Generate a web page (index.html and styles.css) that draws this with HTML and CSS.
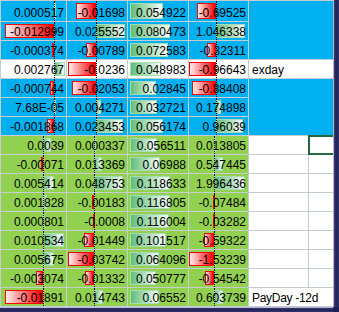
FILE: index.html
```html
<!DOCTYPE html>
<html>
<head>
<meta charset="utf-8">
<link rel="stylesheet" href="styles.css">
</head>
<body>
<div class="frame">
  <div class="sheet">
    <div class="eblk eb1"></div>
    <div class="eblk eb2"></div>

    <div class="row blue">
      <div class="c a"><i class="bar pos" style="margin-left:53px;width:2px"></i><span class="v">0.000517</span><i class="ax"></i></div>
      <div class="c b"><i class="bar neg" style="margin-left:9px;width:20px"></i><span class="v">-0.01698</span><i class="ax"></i></div>
      <div class="c cc"><i class="bar pos" style="margin-left:2px;width:33px"></i><span class="v">0.054922</span></div>
      <div class="c d"><i class="bar neg" style="margin-left:8px;width:19px"></i><span class="v">-0.69525</span><i class="ax"></i></div>
    </div>
    <div class="row blue">
      <div class="c a"><i class="bar neg" style="margin-left:4px;width:49px"></i><span class="v">-0.012999</span><i class="ax"></i></div>
      <div class="c b"><i class="bar pos" style="margin-left:29px;width:29px"></i><span class="v">0.025552</span><i class="ax"></i></div>
      <div class="c cc"><i class="bar pos" style="margin-left:2px;width:40px"></i><span class="v">0.080473</span></div>
      <div class="c d"><i class="bar pos" style="margin-left:27px;width:29px"></i><span class="v">1.046338</span><i class="ax"></i></div>
    </div>
    <div class="row blue">
      <div class="c a"><i class="bar neg" style="margin-left:51px;width:2px"></i><span class="v">-0.000374</span><i class="ax"></i></div>
      <div class="c b"><i class="bar neg" style="margin-left:19px;width:10px"></i><span class="v">-0.00789</span><i class="ax"></i></div>
      <div class="c cc"><i class="bar pos" style="margin-left:2px;width:38px"></i><span class="v">0.072583</span></div>
      <div class="c d"><i class="bar neg" style="margin-left:18px;width:9px"></i><span class="v">-0.32311</span><i class="ax"></i></div>
    </div>
    <div class="row blue white">
      <div class="c a"><i class="bar pos" style="margin-left:53px;width:11px"></i><span class="v">0.002767</span><i class="ax"></i></div>
      <div class="c b"><i class="bar neg" style="margin-left:1px;width:28px"></i><span class="v">-0.0236</span><i class="ax"></i></div>
      <div class="c cc"><i class="bar pos" style="margin-left:2px;width:31px"></i><span class="v">0.048983</span></div>
      <div class="c d"><i class="bar neg" style="margin-left:0px;width:27px"></i><span class="v">-0.96643</span><i class="ax"></i></div>
      <div class="c w wide"><span class="t">exday</span></div>
    </div>
    <div class="row blue">
      <div class="c a"><i class="bar neg" style="margin-left:49px;width:4px"></i><span class="v">-0.000744</span><i class="ax"></i></div>
      <div class="c b"><i class="bar neg" style="margin-left:5px;width:24px"></i><span class="v">-0.02053</span><i class="ax"></i></div>
      <div class="c cc"><i class="bar pos" style="margin-left:2px;width:26px"></i><span class="v">0.02845</span></div>
      <div class="c d"><i class="bar neg" style="margin-left:3px;width:24px"></i><span class="v">-0.88408</span><i class="ax"></i></div>
    </div>
    <div class="row blue">
      <div class="c a"><i class="bar pos" style="margin-left:53px;width:1px"></i><span class="v">7.68E-05</span><i class="ax"></i></div>
      <div class="c b"><i class="bar pos" style="margin-left:29px;width:5px"></i><span class="v">0.004271</span><i class="ax"></i></div>
      <div class="c cc"><i class="bar pos" style="margin-left:2px;width:27px"></i><span class="v">0.032721</span></div>
      <div class="c d"><i class="bar pos" style="margin-left:27px;width:5px"></i><span class="v">0.174898</span><i class="ax"></i></div>
    </div>
    <div class="row blue">
      <div class="c a"><i class="bar neg" style="margin-left:46px;width:7px"></i><span class="v">-0.001868</span><i class="ax"></i></div>
      <div class="c b"><i class="bar pos" style="margin-left:29px;width:27px"></i><span class="v">0.023453</span><i class="ax"></i></div>
      <div class="c cc"><i class="bar pos" style="margin-left:2px;width:33px"></i><span class="v">0.056174</span></div>
      <div class="c d"><i class="bar pos" style="margin-left:27px;width:27px"></i><span class="v">0.96039</span><i class="ax"></i></div>
    </div>

    <div class="row green">
      <div class="c a"><i class="bar pos" style="margin-left:42px;width:8px"></i><span class="v">0.0039</span><i class="ax"></i></div>
      <div class="c b"><i class="bar pos" style="margin-left:27px;width:1px"></i><span class="v">0.000337</span><i class="ax"></i></div>
      <div class="c cc"><i class="bar pos" style="margin-left:2px;width:27px"></i><span class="v">0.056511</span></div>
      <div class="c d"><i class="bar pos" style="margin-left:25px;width:1px"></i><span class="v">0.013805</span><i class="ax"></i></div>
      <div class="c w"></div>
      <div class="c w sel"></div>
    </div>
    <div class="row green">
      <div class="c a"><i class="bar neg" style="margin-left:40px;width:2px"></i><span class="v">-0.00071</span><i class="ax"></i></div>
      <div class="c b"><i class="bar pos" style="margin-left:27px;width:8px"></i><span class="v">0.013369</span><i class="ax"></i></div>
      <div class="c cc"><i class="bar pos" style="margin-left:2px;width:30px"></i><span class="v">0.06988</span></div>
      <div class="c d"><i class="bar pos" style="margin-left:25px;width:9px"></i><span class="v">0.547445</span><i class="ax"></i></div>
      <div class="c w"></div>
      <div class="c w"></div>
    </div>
    <div class="row green">
      <div class="c a"><i class="bar pos" style="margin-left:42px;width:11px"></i><span class="v">0.005414</span><i class="ax"></i></div>
      <div class="c b"><i class="bar pos" style="margin-left:27px;width:29px"></i><span class="v">0.048753</span><i class="ax"></i></div>
      <div class="c cc"><i class="bar pos" style="margin-left:2px;width:40px"></i><span class="v">0.118633</span></div>
      <div class="c d"><i class="bar pos" style="margin-left:25px;width:31px"></i><span class="v">1.996436</span><i class="ax"></i></div>
      <div class="c w"></div>
      <div class="c w"></div>
    </div>
    <div class="row green">
      <div class="c a"><i class="bar pos" style="margin-left:42px;width:4px"></i><span class="v">0.001828</span><i class="ax"></i></div>
      <div class="c b"><i class="bar neg" style="margin-left:25px;width:2px"></i><span class="v">-0.00183</span><i class="ax"></i></div>
      <div class="c cc"><i class="bar pos" style="margin-left:2px;width:40px"></i><span class="v">0.116805</span></div>
      <div class="c d"><i class="bar neg" style="margin-left:24px;width:1px"></i><span class="v">-0.07484</span><i class="ax"></i></div>
      <div class="c w"></div>
      <div class="c w"></div>
    </div>
    <div class="row green">
      <div class="c a"><i class="bar pos" style="margin-left:42px;width:2px"></i><span class="v">0.000801</span><i class="ax"></i></div>
      <div class="c b"><i class="bar neg" style="margin-left:26px;width:1px"></i><span class="v">-0.0008</span><i class="ax"></i></div>
      <div class="c cc"><i class="bar pos" style="margin-left:2px;width:39px"></i><span class="v">0.116004</span></div>
      <div class="c d"><i class="bar neg" style="margin-left:24px;width:1px"></i><span class="v">-0.03282</span><i class="ax"></i></div>
      <div class="c w"></div>
      <div class="c w"></div>
    </div>
    <div class="row green">
      <div class="c a"><i class="bar pos" style="margin-left:42px;width:21px"></i><span class="v">0.010534</span><i class="ax"></i></div>
      <div class="c b"><i class="bar neg" style="margin-left:17px;width:10px"></i><span class="v">-0.01449</span><i class="ax"></i></div>
      <div class="c cc"><i class="bar pos" style="margin-left:2px;width:36px"></i><span class="v">0.101517</span></div>
      <div class="c d"><i class="bar neg" style="margin-left:15px;width:10px"></i><span class="v">-0.59322</span><i class="ax"></i></div>
      <div class="c w"></div>
      <div class="c w"></div>
    </div>
    <div class="row green">
      <div class="c a"><i class="bar pos" style="margin-left:42px;width:11px"></i><span class="v">0.005675</span><i class="ax"></i></div>
      <div class="c b"><i class="bar neg" style="margin-left:1px;width:26px"></i><span class="v">-0.03742</span><i class="ax"></i></div>
      <div class="c cc"><i class="bar pos" style="margin-left:2px;width:29px"></i><span class="v">0.064096</span></div>
      <div class="c d"><i class="bar neg" style="margin-left:0px;width:25px"></i><span class="v">-1.53239</span><i class="ax"></i></div>
      <div class="c w"></div>
      <div class="c w"></div>
    </div>
    <div class="row green">
      <div class="c a"><i class="bar neg" style="margin-left:35px;width:7px"></i><span class="v">-0.003074</span><i class="ax"></i></div>
      <div class="c b"><i class="bar neg" style="margin-left:18px;width:9px"></i><span class="v">-0.01332</span><i class="ax"></i></div>
      <div class="c cc"><i class="bar pos" style="margin-left:2px;width:26px"></i><span class="v">0.050777</span></div>
      <div class="c d"><i class="bar neg" style="margin-left:16px;width:9px"></i><span class="v">-0.54542</span><i class="ax"></i></div>
      <div class="c w"></div>
      <div class="c w"></div>
    </div>
    <div class="row green">
      <div class="c a"><i class="bar neg" style="margin-left:4px;width:38px"></i><span class="v">-0.01891</span><i class="ax"></i></div>
      <div class="c b"><i class="bar pos" style="margin-left:27px;width:9px"></i><span class="v">0.014743</span><i class="ax"></i></div>
      <div class="c cc"><i class="bar pos" style="margin-left:2px;width:29px"></i><span class="v">0.06552</span></div>
      <div class="c d"><i class="bar pos" style="margin-left:25px;width:9px"></i><span class="v">0.603739</span><i class="ax"></i></div>
      <div class="c w wide"><span class="t narrow">PayDay -12d</span></div>
    </div>
  </div>
  <div class="rb"></div>
  <div class="bb"></div>
  <div class="cn"></div>
</div>
</body>
</html>
```

FILE: styles.css
```css
* { box-sizing: border-box; }
html, body { margin: 0; padding: 0; }
body {
  width: 339px;
  height: 312px;
  overflow: hidden;
  background: #fff;
  font-family: "Liberation Sans", Arial, sans-serif;
  font-size: 12px;
  color: #000;
}
.frame {
  display: grid;
  grid-template-columns: 333px 6px;
  grid-template-rows: 307px 5px;
}
.sheet {
  display: grid;
  grid-template-columns: 65px 60px 60px 59px 59px 24px;
  grid-template-rows: 20px repeat(15, 18px);
  gap: 1px;
  padding: 1px 0 1px 1px;
  background: #c5ccd2;
  overflow: hidden;
}
.row { display: contents; }
.c {
  display: grid;
  min-width: 0;
  overflow: hidden;
}
.c > * { grid-area: 1 / 1; }
.blue .c { background: #00b0f0; }
.white .c { background: #fff; }
.green .c { background: #92d050; }
.green .c.w { background: #fff; }
.wide { grid-column: span 2; }

.eblk { background: #00b0f0; grid-column: 5 / span 2; }
.eb1 { grid-row: 1 / span 3; }
.eb2 { grid-row: 5 / span 3; }

.bar {
  justify-self: start;
  margin-top: 2px;
  margin-bottom: 2px;
}
.neg {
  background: linear-gradient(to right, #ffeeee, #ff6a6a 55%, #ff0000);
  border: 1px solid #ff0000;
}
.pos {
  background: linear-gradient(to right, #63be7b, #b9e3c3 60%, #f7fcf8);
  border: 1px solid #a6dcb4;
}
.ax {
  justify-self: start;
  width: 0;
  border-left: 1px dotted #000;
}
.blue .a .ax { margin-left: 53px; }
.green .a .ax { margin-left: 42px; }
.blue .b .ax { margin-left: 29px; }
.green .b .ax { margin-left: 27px; }
.blue .d .ax { margin-left: 27px; }
.green .d .ax { margin-left: 25px; }

.v {
  justify-self: end;
  align-self: end;
  line-height: 13px;
  padding: 0 2px 1px 0;
  white-space: nowrap;
}
.t {
  justify-self: start;
  align-self: end;
  line-height: 13px;
  padding: 0 0 1px 3px;
  white-space: nowrap;
}
.narrow {
  letter-spacing: -0.3px;
}
.sel {
  margin: -1px 0 -1px -1px;
  border: 2px solid #24693c;
  border-right: 0;
}

.rb {
  background: linear-gradient(to right, #b3b5ca 0, #b3b5ca 1px, #3d3e72 1px, #202058 55%, #33336c 100%);
}
.bb {
  background: linear-gradient(to bottom, #b3b5ca 0, #b3b5ca 1px, #3d3e72 1px, #202058 55%, #33336c 100%);
}
.cn { background: #202058; }
```
